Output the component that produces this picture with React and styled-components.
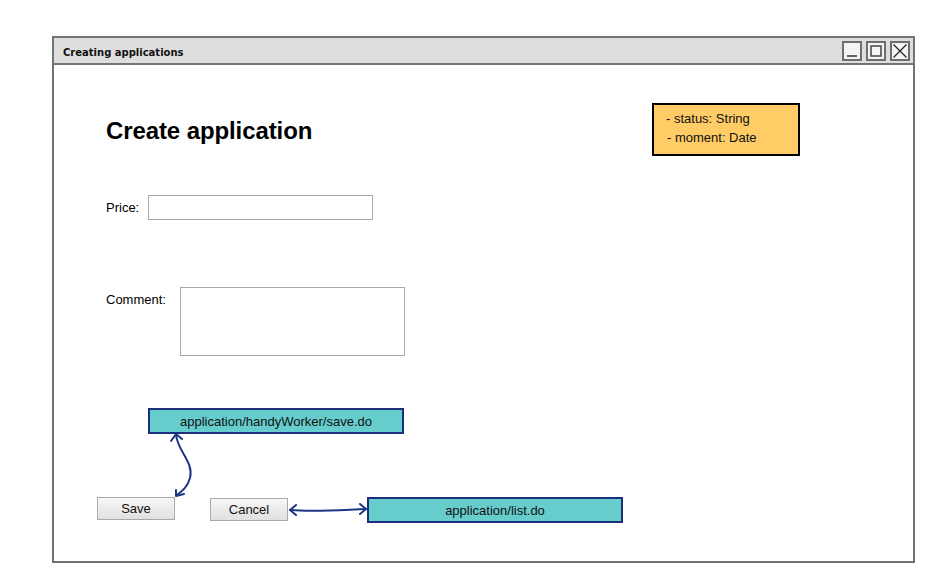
import React from "react";
import styled, { createGlobalStyle } from "styled-components";

const GlobalStyle = createGlobalStyle`
  html, body {
    margin: 0;
    padding: 0;
    background: #ffffff;
    font-family: "Liberation Sans", Arial, sans-serif;
  }
`;

const Page = styled.div`
  position: relative;
  width: 949px;
  height: 578px;
  padding: 36px 0 0 52px;
  box-sizing: border-box;
`;

const Window = styled.div`
  width: 863px;
  height: 527px;
  border: 2px solid #737373;
  box-sizing: border-box;
  display: flex;
  flex-direction: column;
`;

const TitleBar = styled.div`
  height: 25px;
  background: #dedede;
  border-bottom: 2px solid #737373;
  display: flex;
  align-items: center;
  justify-content: space-between;
  padding: 0 3px 0 9px;
`;

const TitleText = styled.span`
  font-family: "DejaVu Sans", sans-serif;
  font-weight: bold;
  font-size: 10px;
  color: #111;
  padding-top: 3px;
`;

const Controls = styled.div`
  display: flex;
  gap: 4px;
`;

const Control = styled.div`
  width: 20px;
  height: 20px;
  box-sizing: border-box;
  border: 2px solid #6e6e6e;
  background: #f4f4f4;
  display: flex;
  align-items: center;
  justify-content: center;
`;

const Body = styled.div`
  flex: 1;
  padding: 38px 113px 0 43px;
  display: flex;
  flex-direction: column;
`;

const HeaderRow = styled.div`
  display: flex;
  align-items: center;
  justify-content: space-between;
  height: 53px;
`;

const Heading = styled.h1`
  margin: 0 0 0 9px;
  padding-top: 3px;
  font-size: 24px;
  font-weight: bold;
  letter-spacing: -0.1px;
  color: #000;
`;

const Note = styled.div`
  width: 148px;
  height: 53px;
  box-sizing: border-box;
  background: #ffcc66;
  border: 2px solid #000;
  padding: 4px 0 0 12px;
  font-size: 13px;
  line-height: 19px;
  color: #111;
`;

const NoteLine = styled.div`
  padding-left: ${(p) => p.$indent || 0}px;
`;

const FieldRow = styled.div`
  display: flex;
  align-items: ${(p) => (p.$top ? "flex-start" : "center")};
  margin-top: ${(p) => p.$gap}px;
  padding-left: 9px;
`;

const Label = styled.label`
  font-size: 13px;
  color: #000;
  width: ${(p) => p.$width}px;
  padding-top: ${(p) => (p.$top ? "5px" : "0")};
`;

const TextBox = styled.div`
  width: 225px;
  height: ${(p) => p.$height}px;
  box-sizing: border-box;
  border: 1px solid #a9a9a9;
  background: #fff;
`;

const LinkBox = styled.div`
  width: 256px;
  height: 26px;
  box-sizing: border-box;
  background: #66cccc;
  border: 2px solid #1d2f7c;
  display: flex;
  align-items: center;
  justify-content: center;
  font-size: 13px;
  color: #111;
  margin-left: ${(p) => p.$offset || 0}px;
`;

const LinkRow = styled.div`
  margin: 52px 0 0 0;
`;

const ButtonRow = styled.div`
  display: flex;
  align-items: flex-start;
  margin-top: 63px;
`;

const Button = styled.div`
  width: 78px;
  height: 23px;
  box-sizing: border-box;
  border: 1px solid #a9a9a9;
  background: linear-gradient(#f7f7f7, #e0e0e0);
  display: flex;
  align-items: center;
  justify-content: center;
  font-size: 13px;
  color: #111;
  margin: ${(p) => p.$margin || "0"};
`;

const Arrows = styled.svg`
  position: absolute;
  left: 0;
  top: 0;
  pointer-events: none;
`;

const NAVY = "#1d3585";

export default function App() {
  return (
    <>
      <GlobalStyle />
      <Page>
        <Window>
          <TitleBar>
            <TitleText>Creating applications</TitleText>
            <Controls>
              <Control>
                <svg width="16" height="16" viewBox="0 0 16 16">
                  <path d="M3 13h10" stroke="#333" strokeWidth="1.5" />
                </svg>
              </Control>
              <Control>
                <svg width="16" height="16" viewBox="0 0 16 16">
                  <rect x="3" y="3" width="10" height="10" fill="none" stroke="#444" strokeWidth="1.5" />
                </svg>
              </Control>
              <Control>
                <svg width="16" height="16" viewBox="0 0 16 16">
                  <path d="M1.5 1.5l13 13M14.5 1.5l-13 13" stroke="#222" strokeWidth="1.2" />
                </svg>
              </Control>
            </Controls>
          </TitleBar>
          <Body>
            <HeaderRow>
              <Heading>Create application</Heading>
              <Note>
                <NoteLine>- status: String</NoteLine>
                <NoteLine $indent={1}>- moment: Date</NoteLine>
              </Note>
            </HeaderRow>
            <FieldRow $gap={39}>
              <Label $width={42}>Price:</Label>
              <TextBox $height={25} />
            </FieldRow>
            <FieldRow $gap={67} $top>
              <Label $width={74} $top>
                Comment:
              </Label>
              <TextBox $height={69} />
            </FieldRow>
            <LinkRow>
              <LinkBox $offset={51}>application/handyWorker/save.do</LinkBox>
            </LinkRow>
            <ButtonRow>
              <Button>Save</Button>
              <Button $margin="1px 0 0 35px">Cancel</Button>
              <LinkBox $offset={79}>application/list.do</LinkBox>
            </ButtonRow>
          </Body>
        </Window>
        <Arrows width="949" height="578" viewBox="0 0 949 578">
          <g fill="none" stroke={NAVY} strokeWidth="2" strokeLinecap="round" strokeLinejoin="round">
            <path d="M176 435 C 178 452, 194 462, 190 478 C 187 488, 182 491, 177 495" />
            <path d="M171 441 L176 434 L182 439" />
            <path d="M176 490 L176 496 L184 494" />
            <path d="M290 510 C 315 512, 340 510, 366 509" />
            <path d="M296 505 L290 510 L296 515" />
            <path d="M360 504 L366 509 L360 514" />
          </g>
        </Arrows>
      </Page>
    </>
  );
}
